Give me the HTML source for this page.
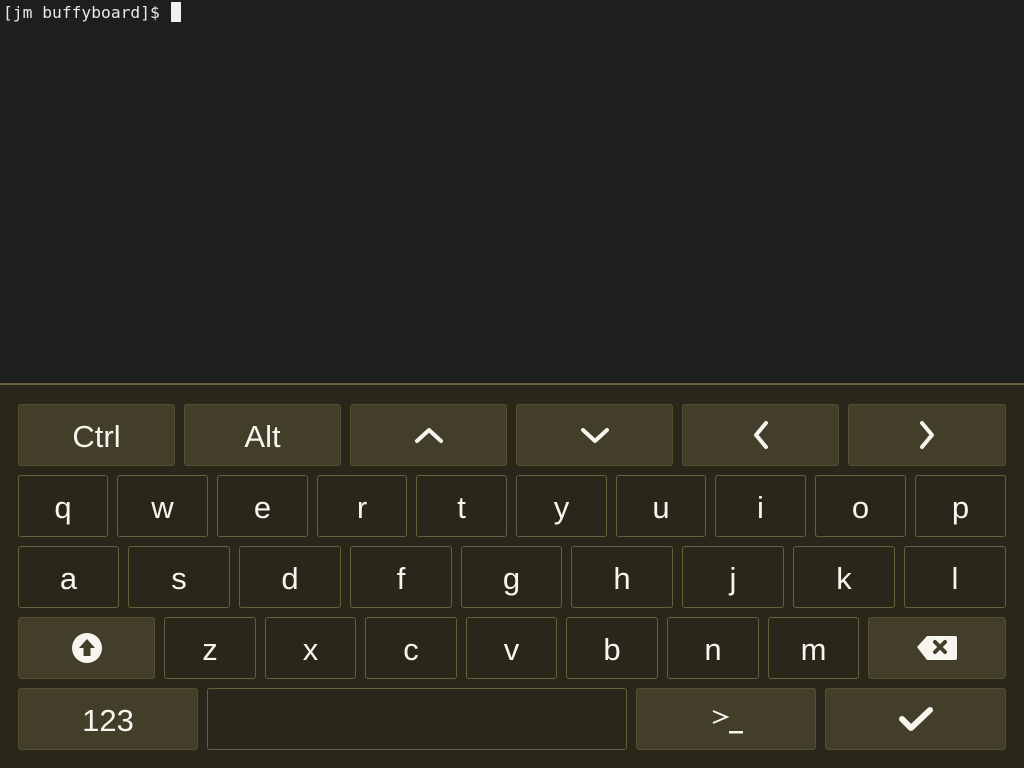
<!DOCTYPE html>
<html><head><meta charset="utf-8"><style>
*{margin:0;padding:0;box-sizing:border-box}
body{width:1024px;height:768px;background:#1e1e1e;position:relative;overflow:hidden;font-family:"Liberation Sans","DejaVu Sans",sans-serif}
#term{position:absolute;left:3px;top:3px;font-family:"DejaVu Sans Mono","Liberation Mono",monospace;font-size:16.3px;color:#e8e8e8;line-height:19px;white-space:pre}
#cur{position:absolute;left:171px;top:2px;width:10px;height:20px;background:#f0f0f0}
#kb{position:absolute;left:0;top:383px;width:1024px;height:385px;background:#29261a;border-top:2px solid #6b603c}
.k{position:absolute;height:62px;border-radius:3px;background:#29261a;border:1px solid #6a5f3c;color:#f6f5ee;font-size:31px;display:flex;align-items:center;justify-content:center;padding-top:3px}
.m{background:#423e2a;border-color:#57502f}
.s{padding-top:0}
</style></head><body>
<div id="term">[jm buffyboard]$</div><div id="cur"></div>
<div id="kb"></div>
<!-- row1 -->
<div class="k m" style="left:18px;top:404px;width:157px">Ctrl</div>
<div class="k m" style="left:184px;top:404px;width:157px">Alt</div>
<div class="k m s" style="left:350px;top:404px;width:157px"><svg width="30" height="20" viewBox="0 0 30 20"><path d="M3 16 L15 5 L27 16" stroke="#f6f5ee" stroke-width="4" fill="none" stroke-linecap="round" stroke-linejoin="round"/></svg></div>
<div class="k m s" style="left:516px;top:404px;width:157px"><svg width="30" height="20" viewBox="0 0 30 20"><path d="M3 5 L15 16 L27 5" stroke="#f6f5ee" stroke-width="4" fill="none" stroke-linecap="round" stroke-linejoin="round"/></svg></div>
<div class="k m s" style="left:682px;top:404px;width:157px"><svg width="20" height="30" viewBox="0 0 20 30"><path d="M15 3 L5 15 L15 27" stroke="#f6f5ee" stroke-width="4" fill="none" stroke-linecap="round" stroke-linejoin="round"/></svg></div>
<div class="k m s" style="left:848px;top:404px;width:158px"><svg width="20" height="30" viewBox="0 0 20 30"><path d="M5 3 L15 15 L5 27" stroke="#f6f5ee" stroke-width="4" fill="none" stroke-linecap="round" stroke-linejoin="round"/></svg></div>
<!-- row2 -->
<div class="k" style="left:18px;top:475px;width:90px">q</div>
<div class="k" style="left:117px;top:475px;width:91px">w</div>
<div class="k" style="left:217px;top:475px;width:91px">e</div>
<div class="k" style="left:317px;top:475px;width:90px">r</div>
<div class="k" style="left:416px;top:475px;width:91px">t</div>
<div class="k" style="left:516px;top:475px;width:91px">y</div>
<div class="k" style="left:616px;top:475px;width:90px">u</div>
<div class="k" style="left:715px;top:475px;width:91px">i</div>
<div class="k" style="left:815px;top:475px;width:91px">o</div>
<div class="k" style="left:915px;top:475px;width:91px">p</div>
<!-- row3 -->
<div class="k" style="left:18px;top:546px;width:101px">a</div>
<div class="k" style="left:128px;top:546px;width:102px">s</div>
<div class="k" style="left:239px;top:546px;width:102px">d</div>
<div class="k" style="left:350px;top:546px;width:102px">f</div>
<div class="k" style="left:461px;top:546px;width:101px">g</div>
<div class="k" style="left:571px;top:546px;width:102px">h</div>
<div class="k" style="left:682px;top:546px;width:102px">j</div>
<div class="k" style="left:793px;top:546px;width:102px">k</div>
<div class="k" style="left:904px;top:546px;width:102px">l</div>
<!-- row4 -->
<div class="k m s" style="left:18px;top:617px;width:137px"><svg width="32" height="32" viewBox="0 0 32 32"><circle cx="16" cy="16" r="15" fill="#f6f5ee"/><path d="M16 7 L24 16 L19.5 16 L19.5 24 L12.5 24 L12.5 16 L8 16 Z" fill="#423e2a"/></svg></div>
<div class="k" style="left:164px;top:617px;width:92px">z</div>
<div class="k" style="left:265px;top:617px;width:91px">x</div>
<div class="k" style="left:365px;top:617px;width:92px">c</div>
<div class="k" style="left:466px;top:617px;width:91px">v</div>
<div class="k" style="left:566px;top:617px;width:92px">b</div>
<div class="k" style="left:667px;top:617px;width:92px">n</div>
<div class="k" style="left:768px;top:617px;width:91px">m</div>
<div class="k m s" style="left:868px;top:617px;width:138px"><svg width="42" height="26" viewBox="0 0 42 26"><path d="M1 12 L11 1 L39 1 Q41 1 41 3 L41 23 Q41 25 39 25 L11 25 Z" fill="#f6f5ee"/><path d="M19 7 L29 17 M29 7 L19 17" stroke="#423e2a" stroke-width="4" stroke-linecap="round"/></svg></div>
<!-- row5 -->
<div class="k m" style="left:18px;top:688px;width:180px">123</div>
<div class="k" style="left:207px;top:688px;width:420px"></div>
<div class="k m s" style="left:636px;top:688px;width:180px"><svg width="36" height="34" viewBox="0 0 36 34"><path d="M5 9 L19 15 L5 21" stroke="#f6f5ee" stroke-width="2" fill="none"/><rect x="21" y="29" width="14" height="2.5" fill="#f6f5ee"/></svg></div>
<div class="k m s" style="left:825px;top:688px;width:181px"><svg width="34" height="26" viewBox="0 0 34 26"><path d="M3 13 L12 22 L31 4" stroke="#f6f5ee" stroke-width="6" fill="none" stroke-linecap="round" stroke-linejoin="round"/></svg></div>
</body></html>
